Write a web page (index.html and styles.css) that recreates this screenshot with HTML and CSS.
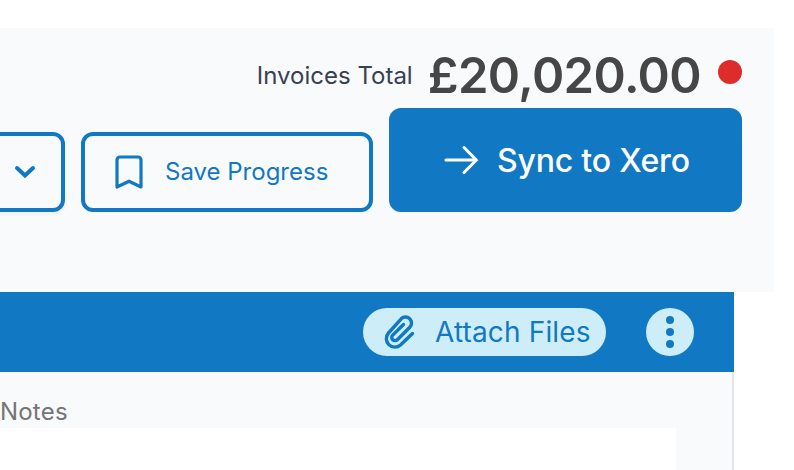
FILE: index.html
```html
<!DOCTYPE html>
<html lang="en">
<head>
    <meta charset="UTF-8">
    <meta name="viewport" content="width=device-width, initial-scale=1.0">
    <title>Invoices</title>
    <link rel="stylesheet" href="styles.css">
</head>
<body>
    <div class="summary">
        <div class="total">
            <span class="total-label">Invoices Total</span>
            <span class="total-amount">£20,020.00</span>
            <span class="status-dot"></span>
        </div>
        <div class="actions">
            <button class="btn btn-dropdown" aria-label="More options">
                <svg width="22" height="14" viewBox="0 0 22 14" fill="none" stroke="currentColor" stroke-width="4" stroke-linecap="round"><path d="M3 3l8 7.5L19 3"/></svg>
            </button>
            <button class="btn btn-save">
                <svg width="28" height="34" viewBox="0 0 28 34" fill="none" stroke="currentColor" stroke-width="3.2" stroke-linejoin="round"><path d="M2 32V5a3 3 0 0 1 3-3h18a3 3 0 0 1 3 3v27l-12-5.8z"/></svg>
                <span>Save Progress</span>
            </button>
            <button class="btn btn-sync">
                <svg width="40" height="40" viewBox="0 0 24 24" fill="none" stroke="currentColor" stroke-width="1.8" stroke-linecap="round"><path d="M13.8 4.5L21.2 12l-7.4 7.5M21.2 12H3"/></svg>
                <span>Sync to Xero</span>
            </button>
        </div>
    </div>

    <div class="invoice">
        <div class="invoice-header">
            <button class="attach">
                <svg width="44" height="48" viewBox="0 0 44 48" fill="none" stroke="currentColor" stroke-width="3.4" stroke-linecap="round" stroke-linejoin="round"><path d="M34.5 25.5L22.5 37a8.5 8.5 0 0 1-12-12L23.2 10.8a6 6 0 0 1 8.6 8.4L19.3 31.7a3.2 3.2 0 0 1-4.6-4.6L25.5 16.5"/></svg>
                <span>Attach Files</span>
            </button>
            <button class="menu" aria-label="Menu">
                <svg width="8" height="32" viewBox="0 0 8 32" fill="currentColor"><circle cx="4" cy="4" r="4"/><circle cx="4" cy="16" r="4"/><circle cx="4" cy="28" r="4"/></svg>
            </button>
        </div>
        <div class="invoice-body">
            <label class="notes-label">Notes</label>
            <div class="notes-field"></div>
        </div>
    </div>
</body>
</html>
```
FILE: styles.css
```css
* {
    box-sizing: border-box;
}

body {
    font-family: Inter, sans-serif;
    margin: 0;
    padding: 28px 0 0;
    height: 470px;
    overflow: hidden;
    background-color: #fff;
}

button {
    font-family: inherit;
    border: none;
    padding: 0;
    cursor: pointer;
}

svg {
    display: block;
    flex-shrink: 0;
}

.summary {
    width: 774px;
    height: 264px;
    padding-right: 32px;
    background-color: #f9fafc;
}

.total {
    display: flex;
    justify-content: flex-end;
    align-items: center;
    height: 80px;
    padding-top: 14px;
    white-space: nowrap;
}

.total-label {
    font-size: 24px;
    color: #374151;
}

.total-amount {
    margin-left: 15px;
    font-size: 49px;
    font-weight: 600;
    letter-spacing: -0.6px;
    color: #464646;
}

.status-dot {
    width: 24px;
    height: 24px;
    margin: -6px 0 0 17px;
    border-radius: 50%;
    background-color: #dc2c2c;
}

.actions {
    display: flex;
    justify-content: flex-end;
    align-items: flex-end;
    gap: 16px;
}

.btn {
    display: flex;
    align-items: center;
    flex-shrink: 0;
    height: 80px;
    border: 4px solid #1178c3;
    border-radius: 12px;
    background-color: #f9fafc;
    color: #1178c3;
    white-space: nowrap;
}

.btn-dropdown {
    justify-content: flex-end;
    width: 100px;
    padding-right: 25px;
    box-shadow: 0 2px 4px rgba(0, 0, 0, 0.05);
}

.btn-save {
    width: 292px;
    padding-left: 30px;
    gap: 22px;
    font-size: 24px;
}

.btn-save span {
    padding-bottom: 2px;
}

.btn-sync {
    width: 353px;
    height: 104px;
    padding-left: 48px;
    gap: 16px;
    background-color: #1178c3;
    color: #fff;
    font-size: 32px;
    font-weight: 500;
    letter-spacing: -0.2px;
}

.invoice {
    width: 734px;
    background-color: #f9fafc;
}

.invoice-header {
    display: flex;
    justify-content: flex-end;
    align-items: center;
    gap: 40px;
    height: 80px;
    padding-right: 40px;
    background-color: #1178c3;
}

.attach {
    display: flex;
    align-items: center;
    gap: 13px;
    width: 243px;
    height: 48px;
    padding-left: 15px;
    border-radius: 24px;
    background-color: #cdeef9;
    color: #1178c3;
    font-size: 28px;
    letter-spacing: 0.15px;
    white-space: nowrap;
}

.menu {
    display: flex;
    justify-content: center;
    align-items: center;
    width: 48px;
    height: 48px;
    border-radius: 50%;
    background-color: #cdeef9;
    color: #1178c3;
}

.invoice-body {
    height: 98px;
    padding-top: 24px;
    border-right: 2px solid #e4e5ea;
}

.notes-label {
    display: block;
    height: 32px;
    line-height: 32px;
    font-size: 24px;
    letter-spacing: 0.2px;
    color: #757575;
}

.notes-field {
    width: 676px;
    height: 42px;
    background-color: #fff;
}
```
